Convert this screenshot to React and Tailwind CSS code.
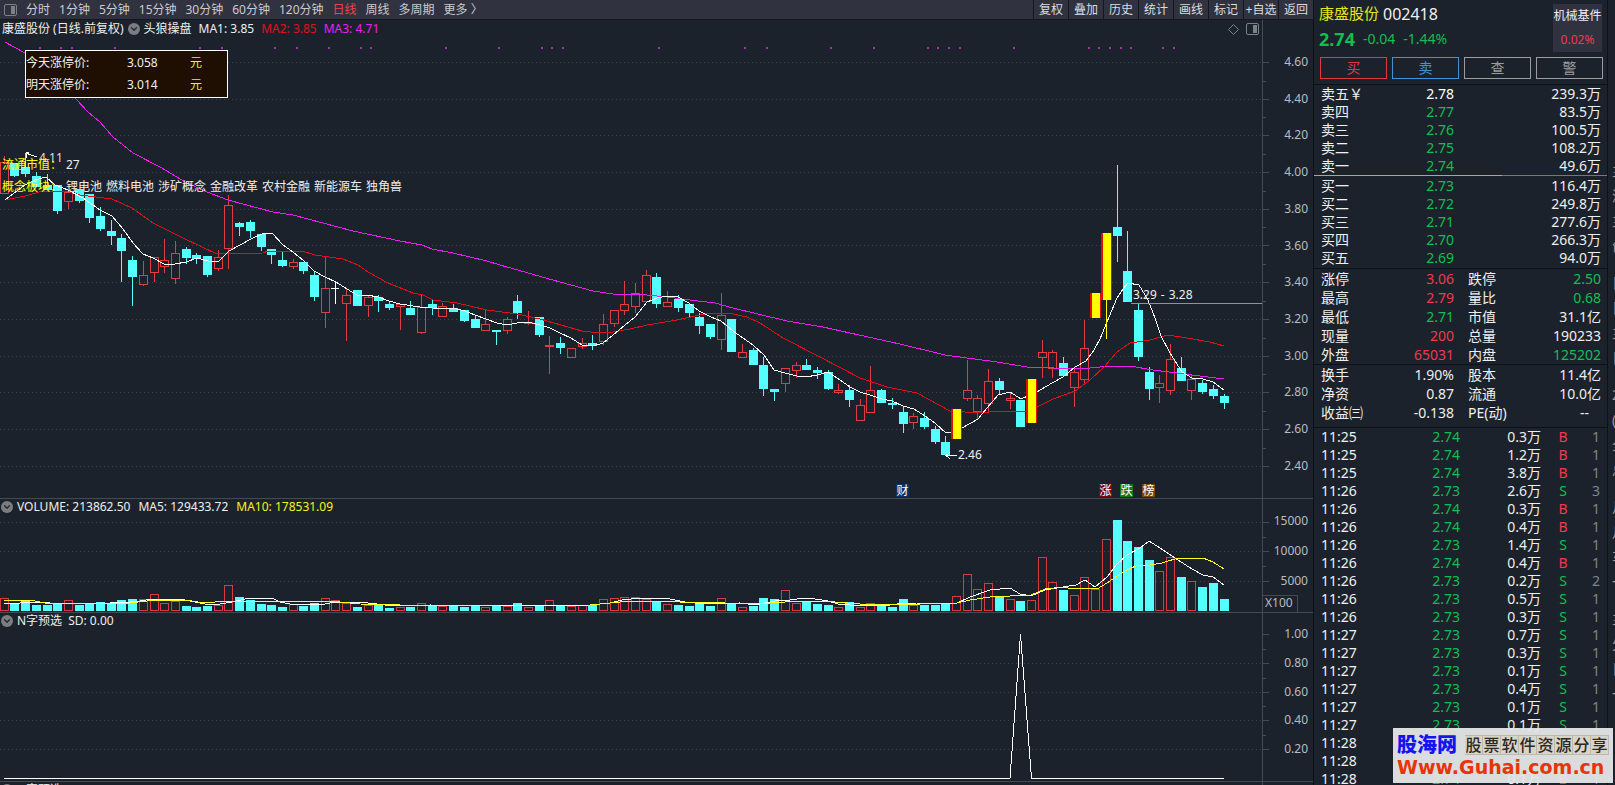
import { ChevronDown } from 'lucide-react';

const PLOT_W = 1262;

const periods = ['分时', '1分钟', '5分钟', '15分钟', '30分钟', '60分钟', '120分钟', '日线', '周线', '多周期', '更多 〉'];
const tools = ['复权', '叠加', '历史', '统计', '画线', '标记', '+自选', '返回'];

// centre of the nth bar, bars are 10.7px apart
const barX = (i) => Math.floor((425 + 1070 * i) / 100);

// [kind, open/close top, open/close bottom, high, low, volume top]
// kind: u = up, d = down, x = flat, y = signal bar
const candles = [
  ['u', 162, 194, 156, 194, 598], ['d', 163, 176, 163, 177, 604], ['d', 167, 174, 153, 177, 601], ['d', 176, 187, 172, 187, 605],
  ['d', 185, 190, 174, 190, 605], ['d', 185, 211, 185, 214, 604], ['u', 192, 202, 192, 209, 600], ['d', 189, 201, 189, 203, 605],
  ['d', 194, 218, 194, 223, 604], ['d', 216, 229, 207, 231, 602], ['d', 231, 236, 220, 245, 603], ['d', 238, 251, 234, 282, 600],
  ['d', 260, 277, 256, 306, 599], ['u', 275, 285, 261, 286, 599], ['u', 257, 273, 257, 282, 594], ['u', 260, 267, 239, 273, 603],
  ['u', 253, 279, 241, 284, 601], ['d', 249, 258, 247, 264, 606], ['d', 255, 259, 253, 264, 607], ['d', 256, 275, 256, 277, 606],
  ['u', 257, 269, 250, 271, 605], ['u', 205, 249, 195, 269, 585], ['d', 223, 227, 222, 236, 597], ['d', 222, 231, 220, 238, 600],
  ['d', 234, 247, 234, 251, 604], ['d', 249, 255, 249, 264, 605], ['d', 260, 266, 251, 267, 607], ['u', 262, 267, 259, 269, 604],
  ['d', 262, 271, 262, 274, 606], ['d', 275, 297, 271, 301, 603], ['u', 288, 313, 256, 328, 598], ['x', 288, 289, 282, 304, 600],
  ['u', 295, 304, 288, 341, 603], ['d', 290, 306, 290, 306, 607], ['u', 297, 306, 295, 317, 605], ['d', 297, 301, 295, 312, 605],
  ['d', 304, 308, 301, 310, 608], ['u', 304, 307, 304, 330, 607], ['d', 308, 315, 301, 315, 607], ['u', 307, 333, 295, 334, 603],
  ['d', 304, 308, 300, 315, 606], ['u', 306, 317, 303, 317, 606], ['d', 308, 312, 304, 312, 606], ['d', 310, 321, 310, 322, 607],
  ['d', 319, 328, 315, 328, 606], ['u', 324, 331, 310, 331, 607], ['d', 330, 332, 330, 345, 605], ['u', 319, 331, 317, 334, 606],
  ['d', 301, 313, 295, 319, 603], ['u', 322, 324, 311, 325, 607], ['d', 317, 335, 317, 337, 606], ['u', 345, 347, 336, 374, 600],
  ['d', 343, 348, 337, 354, 606], ['u', 348, 358, 348, 358, 606], ['u', 343, 347, 338, 349, 605], ['d', 343, 346, 335, 350, 605],
  ['u', 324, 342, 314, 345, 599], ['u', 310, 324, 310, 327, 598], ['u', 304, 311, 281, 315, 597], ['u', 293, 307, 283, 313, 597],
  ['u', 275, 302, 270, 302, 599], ['d', 277, 304, 273, 308, 601], ['u', 302, 307, 291, 307, 604], ['d', 299, 308, 295, 312, 605],
  ['d', 304, 313, 304, 317, 606], ['d', 317, 326, 313, 334, 604], ['d', 324, 337, 324, 339, 606], ['u', 315, 340, 293, 350, 598],
  ['d', 319, 352, 319, 352, 603], ['u', 352, 358, 344, 358, 607], ['d', 350, 365, 348, 365, 606], ['d', 365, 389, 357, 396, 598],
  ['d', 389, 392, 389, 401, 599], ['u', 368, 384, 368, 392, 590], ['u', 365, 371, 362, 378, 603], ['d', 365, 370, 359, 370, 601],
  ['d', 370, 373, 367, 379, 604], ['d', 372, 389, 370, 390, 605], ['u', 390, 393, 384, 394, 607], ['d', 390, 400, 385, 407, 602],
  ['u', 405, 421, 399, 421, 607], ['u', 390, 413, 366, 413, 603], ['d', 390, 403, 389, 403, 606], ['d', 403, 405, 398, 409, 607],
  ['d', 412, 424, 407, 433, 599], ['u', 416, 423, 413, 429, 605], ['d', 418, 427, 412, 429, 605], ['d', 429, 442, 426, 444, 605],
  ['d', 442, 455, 436, 455, 604], ['y', 409, 439, 409, 439, 596], ['u', 390, 399, 360, 401, 574], ['u', 398, 412, 395, 420, 589],
  ['u', 381, 404, 369, 413, 583], ['d', 381, 390, 378, 395, 597], ['u', 398, 401, 392, 409, 599], ['d', 400, 427, 400, 427, 601],
  ['y', 379, 423, 379, 423, 600], ['u', 352, 358, 340, 378, 557], ['u', 352, 369, 350, 378, 582], ['d', 363, 376, 357, 376, 590],
  ['u', 372, 388, 368, 407, 595], ['u', 348, 380, 320, 383, 577], ['y', 293, 318, 293, 318, 589], ['y', 233, 300, 233, 339, 539],
  ['d', 227, 236, 165, 262, 520], ['d', 271, 302, 231, 302, 541], ['d', 310, 357, 303, 361, 547], ['d', 372, 389, 367, 400, 560],
  ['u', 383, 388, 375, 403, 571], ['u', 359, 391, 344, 395, 557], ['d', 368, 381, 357, 381, 577], ['u', 379, 391, 374, 400, 581],
  ['d', 383, 392, 380, 394, 587], ['d', 389, 396, 385, 399, 583], ['d', 396, 403, 394, 409, 599],
].map(([kind, top, bottom, high, low, vol], i) => ({ kind, top, bottom, high, low, vol, x: barX(i) }));

const ma1 = '5,200 17,191 25,185 35,180 46,177 55,185 68,190 83,198 100,210 112,216 123,229 133,243 143,254 153,258 164,264 175,264 186,262 197,258 208,261 219,261 229,251 240,245 251,239 262,234 272,233 283,245 293,252 304,261 314,271 325,277 336,282 347,289 357,295 367,295 378,297 389,301 400,304 420,307 433,308 453,308 465,311 475,315 486,319 497,323 507,325 517,323 528,322 540,325 550,328 560,333 571,338 582,345 593,346 603,343 613,335 625,325 635,317 647,302 657,298 667,296 678,297 689,303 699,311 711,317 721,321 733,331 753,345 764,355 774,370 785,373 797,376 806,377 817,375 828,372 840,380 850,387 860,392 870,395 882,399 892,401 903,406 914,409 925,416 935,423 946,433 953,432 962,428 978,419 987,408 998,395 1010,392 1021,399 1037,392 1052,383 1063,377 1075,367 1086,361 1094,350 1100,339 1107,322 1117,298 1123,289 1128,283 1139,285 1148,300 1155,318 1161,336 1170,353 1182,372 1192,378 1203,379 1213,382 1224,390';
const ma2 = '5,200 25,196 43,191 67,191 80,195 112,199 132,208 153,223 185,239 217,254 263,253 268,251 302,251 315,255 343,259 358,265 368,272 388,283 413,293 423,295 433,300 457,303 487,310 517,314 540,319 582,331 600,333 613,332 630,329 647,325 677,320 695,316 710,313 733,314 747,317 760,323 783,338 820,357 860,378 887,387 917,393 950,411 980,413 997,411 1027,412 1053,399 1075,391 1090,380 1105,366 1117,352 1130,343 1150,340 1168,335 1187,338 1210,342 1224,346';
const ma3 = '5,42 25,53 50,76 76,99 88,112 100,122 113,137 133,153 160,167 187,183 207,192 228,200 273,212 293,215 353,231 400,241 422,245 432,249 453,253 487,261 500,265 560,282 593,291 613,294 647,295 667,297 690,300 715,303 733,308 787,321 823,327 850,333 900,344 945,355 997,362 1027,367 1080,369 1110,366 1130,366 1153,370 1224,379';
const volMa5 = '4,603 20,603 31,602 50,603 80,604 110,603 130,602 140,601 152,599 180,599 195,602 205,604 220,604 232,602 245,599 255,598 272,598 280,602 290,604 320,605 335,602 360,602 385,605 410,606 430,605 480,606 590,605 610,603 622,600 640,598 655,598 670,599 685,602 705,604 740,603 755,605 770,602 780,600 790,600 805,598 815,599 828,601 838,604 850,605 890,605 905,603 916,603 955,604 970,597 990,590 1010,588 1020,594 1031,596 1045,590 1063,587 1076,585 1085,580 1095,587 1107,577 1117,564 1127,555 1140,548 1149,541 1160,548 1178,560 1192,569 1203,575 1213,577 1224,585';
const volMa10 = '4,600 30,600 45,603 130,603 155,600 185,600 205,603 225,601 250,601 280,602 310,601 340,602 360,604 400,605 450,606 500,605 590,605 610,603 630,601 660,601 680,602 700,602 750,604 770,603 800,601 815,601 835,602 860,604 890,605 920,604 957,603 970,600 990,597 1031,595 1045,589 1063,587 1073,589 1085,588 1097,589 1107,583 1117,576 1127,570 1138,565 1150,565 1162,563 1178,558 1203,558 1213,562 1224,569';

const signalDots = [40, 61, 72, 115, 200, 222, 275, 297, 329, 361, 371, 446, 499, 542, 552, 563, 659, 745, 767, 831, 874, 928, 938, 949, 960, 1014, 1089, 1099, 1110, 1121, 1131, 1163, 1174];

const priceGrid = [62, 99, 135, 172, 209, 245, 282, 319, 356, 392, 429, 466];
const volGrid = [522, 551, 581];
const selGrid = [634, 663, 692, 720, 749];

const asks = [
  ['卖五￥', '2.78', '239.3万'],
  ['卖四', '2.77', '83.5万'],
  ['卖三', '2.76', '100.5万'],
  ['卖二', '2.75', '108.2万'],
  ['卖一', '2.74', '49.6万'],
];
const bids = [
  ['买一', '2.73', '116.4万'],
  ['买二', '2.72', '249.8万'],
  ['买三', '2.71', '277.6万'],
  ['买四', '2.70', '266.3万'],
  ['买五', '2.69', '94.0万'],
];

const RED = 'text-[#f03a4c]';
const GREEN = 'text-[#12be50]';
const WHITE = 'text-[#eeeeee]';

const stats = [
  ['涨停', '3.06', RED, '跌停', '2.50', GREEN],
  ['最高', '2.79', RED, '量比', '0.68', GREEN],
  ['最低', '2.71', GREEN, '市值', '31.1亿', WHITE],
  ['现量', '200', RED, '总量', '190233', WHITE],
  ['外盘', '65031', RED, '内盘', '125202', GREEN],
];
const fundamentals = [
  ['换手', '1.90%', WHITE, '股本', '11.4亿', WHITE],
  ['净资', '0.87', WHITE, '流通', '10.0亿', WHITE],
  ['收益㈢', '-0.138', WHITE, 'PE(动)', '--', WHITE],
];

const trades = [
  ['11:25', '2.74', '0.3万', 'B', 1],
  ['11:25', '2.74', '1.2万', 'B', 1],
  ['11:25', '2.74', '3.8万', 'B', 1],
  ['11:26', '2.73', '2.6万', 'S', 3],
  ['11:26', '2.74', '0.3万', 'B', 1],
  ['11:26', '2.74', '0.4万', 'B', 1],
  ['11:26', '2.73', '1.4万', 'S', 1],
  ['11:26', '2.74', '0.4万', 'B', 1],
  ['11:26', '2.73', '0.2万', 'S', 2],
  ['11:26', '2.73', '0.5万', 'S', 1],
  ['11:26', '2.73', '0.3万', 'S', 1],
  ['11:27', '2.73', '0.7万', 'S', 1],
  ['11:27', '2.73', '0.3万', 'S', 1],
  ['11:27', '2.73', '0.1万', 'S', 1],
  ['11:27', '2.73', '0.4万', 'S', 1],
  ['11:27', '2.73', '0.1万', 'S', 1],
  ['11:27', '2.73', '0.1万', 'S', 1],
  ['11:28', '', '', '', ''],
  ['11:28', '', '', '', ''],
  ['11:28', '2.74', '0.1万', 'B', 1],
];

const leftPct = (x) => ({ left: `${(x / PLOT_W) * 100}%` });

const PanelIcon = ({ className }) => (
  <svg className={className} width="13" height="12" viewBox="0 0 13 12" fill="none">
    <rect x="0.5" y="0.5" width="12" height="11" rx="1.5" stroke="currentColor" />
    <rect x="7" y="2" width="4" height="8" fill="currentColor" />
  </svg>
);

const FoldButton = () => (
  <button aria-label="指标菜单" className="flex size-3 shrink-0 items-center justify-center rounded-full bg-[#7b7d80] text-[#22262e]">
    <ChevronDown className="size-[10px]" strokeWidth={3} />
  </button>
);

const Grid = ({ lines }) => (
  <g stroke="#3d444e" strokeDasharray="1 3">
    {lines.map((y) => <line key={y} x1="0" x2={PLOT_W} y1={y + 0.5} y2={y + 0.5} />)}
  </g>
);

const Plot = ({ top, height, className, children }) => (
  <svg className={`block w-full ${className}`} viewBox={`0 ${top} ${PLOT_W} ${height}`} preserveAspectRatio="none" shapeRendering="crispEdges" fill="none">
    {children}
  </svg>
);

const AxisTicks = ({ top, height, lines, className }) => (
  <svg className={`block w-[6px] shrink-0 ${className}`} viewBox={`0 ${top} 6 ${height}`} shapeRendering="crispEdges" stroke="#454b55">
    {lines.map((y, i) => (
      <g key={y}>
        <line x1="0" x2="6" y1={y + 0.5} y2={y + 0.5} />
        {i < lines.length - 1 && (
          <line x1="0" x2="3" y1={Math.round((y + lines[i + 1]) / 2) + 0.5} y2={Math.round((y + lines[i + 1]) / 2) + 0.5} />
        )}
      </g>
    ))}
  </svg>
);

const Candle = ({ c }) => {
  if (c.kind === 'd') {
    return (
      <g fill="#55ffff">
        <rect x={c.x} y={c.high} width="1" height={c.low - c.high} />
        <rect x={c.x - 4} y={c.top} width="9" height={c.bottom - c.top} />
      </g>
    );
  }
  if (c.kind === 'x') {
    return (
      <g fill="#ffffff">
        <rect x={c.x} y={c.high} width="1" height={c.low - c.high} />
        <rect x={c.x - 4} y={c.top} width="8" height="1" />
      </g>
    );
  }
  return (
    <g fill="#e03c44">
      <rect x={c.x} y={c.high} width="1" height={c.top - c.high} />
      <rect x={c.x} y={c.bottom} width="1" height={c.low - c.bottom} />
      <rect x={c.x - 4 + 0.5} y={c.top + 0.5} width="8" height={c.bottom - c.top - 1} fill="none" stroke="#e03c44" />
    </g>
  );
};

const SignalBar = ({ c }) => (
  <g>
    <rect x={c.x} y={c.bottom} width="1" height={c.low - c.bottom} fill="#ffff00" />
    <rect x={c.x - 5} y={c.top} width="11" height={c.bottom - c.top} fill="#e01000" />
    <rect x={c.x - 3} y={c.top} width="8" height={c.bottom - c.top} fill="#ffff00" />
  </g>
);

const Badge = ({ x, className, children }) => (
  <span className={`absolute top-[446px] w-[13px] text-center text-xs leading-[13px] text-white ${className}`} style={leftPct(x)}>
    {children}
  </span>
);

const PriceChart = () => (
  <section className="flex border-b border-[#454b55]">
    <div className="min-w-0 flex-1">
      <div className="flex h-[18px] items-center gap-[7px] pl-[2px] pr-[3px] whitespace-nowrap">
        <span className="flex items-center gap-1">
          <span>康盛股份 (日线.前复权)</span>
          <FoldButton />
          <span>头狼操盘</span>
        </span>
        <span>MA1: 3.85</span>
        <span className="text-[#e0101c]">MA2: 3.85</span>
        <span className="text-[#f01cf8]">MA3: 4.71</span>
        <span className="ml-auto flex items-center gap-[7px] text-[#7d8187]">
          <svg width="11" height="11" viewBox="0 0 11 11" fill="none" stroke="currentColor">
            <path d="M5.5 0.5 10.5 5.5 5.5 10.5 0.5 5.5Z" />
          </svg>
          <PanelIcon />
        </span>
      </div>
      <div className="relative">
        <Plot top={38} height={460} className="h-[460px]">
          <Grid lines={priceGrid} />
          {signalDots.map((x) => <rect key={x} x={x - 1} y="47" width="2" height="2" fill="#b02cb8" />)}
          {candles.filter((c) => c.kind !== 'y').map((c) => <Candle key={c.x} c={c} />)}
          <polyline points={ma3} stroke="#f01cf8" />
          <polyline points={ma2} stroke="#dc1018" />
          <polyline points={ma1} stroke="#ffffff" />
          {candles.filter((c) => c.kind === 'y').map((c) => <SignalBar key={c.x} c={c} />)}
          <line x1="1131" x2={PLOT_W} y1="303.5" y2="303.5" stroke="#8f9296" />
          <path d="M26 158V152.500H29M27 153.500L37 157" stroke="#ffffff" />
          <path d="M957 455.500H946M950 452L946 455.500L950 459" stroke="#ffffff" />
        </Plot>

        <div className="absolute left-[25px] top-[12px] grid h-[48px] w-[203px] grid-cols-[101px_63px_1fr] content-center border border-white bg-[#1e0f02] pb-px leading-[22px]">
          <span>今天涨停价:</span>
          <span>3.058</span>
          <span className="text-[#f0f020]">元</span>
          <span>明天涨停价:</span>
          <span>3.014</span>
          <span className="text-[#f0f020]">元</span>
        </div>

        <span className="absolute left-[39px] top-[112px] leading-4 text-[#dddddd]">4.11</span>
        <div className="absolute left-[2px] top-[116px] grid grid-cols-[64px_auto] whitespace-nowrap leading-[22px]">
          <span className="text-[#ffff00]">流通市值：</span>
          <span>27</span>
          <span className="text-[#ffff00]">概念板块：</span>
          <span className="flex gap-1">
            {['锂电池', '燃料电池', '涉矿概念', '金融改革', '农村金融', '新能源车', '独角兽'].map((t) => <span key={t}>{t}</span>)}
          </span>
        </div>
        <span className="absolute top-[409px] leading-4" style={leftPct(958)}>2.46</span>
        <span className="absolute top-[249px] flex gap-1 leading-4" style={leftPct(1133)}>
          <span>3.29</span>
          <span>-</span>
          <span>3.28</span>
        </span>
        <Badge x={896} className="bg-[#0b3266]">财</Badge>
        <Badge x={1099} className="bg-[#7d0606]">涨</Badge>
        <Badge x={1120} className="bg-[#0a7a14]">跌</Badge>
        <Badge x={1142} className="bg-[#7c4504]">榜</Badge>
      </div>
    </div>
    <div className="flex w-[51px] shrink-0 border-l border-[#454b55]">
      <AxisTicks top={20} height={478} lines={priceGrid} className="h-[478px]" />
      <div className="flex flex-1 flex-col justify-between pb-6 pr-[5px] pt-[34px] text-right leading-4 text-[#b9bcc0]">
        {['4.60', '4.40', '4.20', '4.00', '3.80', '3.60', '3.40', '3.20', '3.00', '2.80', '2.60', '2.40'].map((p) => <span key={p}>{p}</span>)}
      </div>
    </div>
  </section>
);

const VolumeChart = () => (
  <section className="flex border-b border-[#454b55]">
    <div className="min-w-0 flex-1">
      <div className="flex h-4 items-center gap-2 whitespace-nowrap pl-[1px]">
        <span className="flex items-center gap-1">
          <FoldButton />
          <span>VOLUME: 213862.50</span>
        </span>
        <span>MA5: 129433.72</span>
        <span className="text-[#f4f41c]">MA10: 178531.09</span>
      </div>
      <Plot top={515} height={97} className="h-[97px]">
        <Grid lines={volGrid} />
        {candles.map((c) => c.kind === 'd'
          ? <rect key={c.x} x={c.x - 4} y={c.vol} width="9" height={611 - c.vol} fill="#55ffff" />
          : <rect key={c.x} x={c.x - 3.5} y={c.vol + 0.5} width="8" height={610 - c.vol} stroke="#d83a44" />)}
        <polyline points={volMa5} stroke="#ffffff" />
        <polyline points={volMa10} stroke="#ffff20" />
      </Plot>
    </div>
    <div className="flex w-[51px] shrink-0 border-l border-[#454b55]">
      <div className="flex flex-1 flex-col">
        <div className="flex flex-1">
          <AxisTicks top={499} height={96} lines={volGrid} className="h-[96px]" />
          <div className="flex flex-1 flex-col items-end gap-[14px] pr-[5px] pt-[14px] leading-4 text-[#b9bcc0]">
            <span>15000</span>
            <span>10000</span>
            <span>5000</span>
          </div>
        </div>
        <span className="h-[17px] w-[35px] border-r border-t border-[#454b55] pl-[2px] leading-[14px] text-[#b9bcc0]">X100</span>
      </div>
    </div>
  </section>
);

const SelectChart = () => (
  <section className="flex border-b border-[#454b55]">
    <div className="min-w-0 flex-1">
      <div className="flex h-4 items-center gap-[6px] whitespace-nowrap pl-[1px]">
        <span className="flex items-center gap-1">
          <FoldButton />
          <span>N字预选</span>
        </span>
        <span>SD: 0.00</span>
      </div>
      <Plot top={629} height={152} className="h-[152px]">
        <Grid lines={selGrid.slice(1)} />
        <polyline points="4,778.5 1010,778.5 1020.5,634 1031.5,778.5 1224,778.5" stroke="#ffffff" />
      </Plot>
    </div>
    <div className="flex w-[51px] shrink-0 border-l border-[#454b55]">
      <AxisTicks top={613} height={168} lines={selGrid} className="h-[168px]" />
      <div className="flex flex-1 flex-col justify-between pb-6 pr-[5px] pt-[13px] text-right leading-4 text-[#b9bcc0]">
        {['1.00', '0.80', '0.60', '0.40', '0.20'].map((p) => <span key={p}>{p}</span>)}
      </div>
    </div>
  </section>
);

const DepthTable = ({ rows }) => (
  <table className="w-full table-fixed">
    <tbody>
      {rows.map(([label, price, vol]) => (
        <tr key={label} className="h-[18px] leading-[18px]">
          <td className="w-[70px] pl-[7px] text-[#f0f0f0]">{label}</td>
          <td className={`w-[70px] text-right ${price === '2.78' ? 'text-white' : GREEN}`}>{price}</td>
          <td className={`pr-[6px] text-right ${WHITE}`}>{vol}</td>
        </tr>
      ))}
    </tbody>
  </table>
);

const StatTable = ({ rows }) => (
  <table className="w-full table-fixed">
    <tbody>
      {rows.map(([l1, v1, c1, l2, v2, c2]) => (
        <tr key={l1} className="h-[19px] leading-[19px]">
          <td className="w-[60px] pl-[7px] text-[#f0f0f0]">{l1}</td>
          <td className={`w-[80px] text-right ${c1}`}>{v1}</td>
          <td className="w-[70px] pl-[14px] text-[#f0f0f0]">{l2}</td>
          <td className={`text-right ${v2 === '--' ? 'pr-[18px]' : 'pr-[6px]'} ${c2}`}>{v2}</td>
        </tr>
      ))}
    </tbody>
  </table>
);

const QuotePanel = () => (
  <aside className="w-[295px] shrink-0 overflow-hidden border-x border-[#0e1217] text-sm">
    <div className="flex h-[85px] flex-col border-b border-[#0e1217]">
      <div className="flex flex-1 justify-between pl-[5px] pr-[5px]">
        <div>
          <div className="flex h-7 items-center gap-1">
            <span className="text-[15px] text-[#e6e61e]">康盛股份</span>
            <span className="text-base text-[#f0f0f0]">002418</span>
          </div>
          <div className={`flex h-[22px] items-center gap-2 ${GREEN}`}>
            <span className="text-lg font-bold">2.74</span>
            <span>-0.04</span>
            <span>-1.44%</span>
          </div>
        </div>
        <div className="mt-1 flex h-12 w-[49px] flex-col items-center justify-between bg-[#31323f] py-1 text-xs leading-4">
          <a href="#sector" className="whitespace-nowrap text-[#f0f0f0]">机械基件</a>
          <span className={RED}>0.02%</span>
        </div>
      </div>
      <div className="mb-[5px] flex gap-[5px] pl-[6px] pr-1 leading-5">
        <button className="h-[22px] flex-1 border border-[#e0383f] text-[#e0383f]">买</button>
        <button className="h-[22px] flex-1 border border-[#4292d8] text-[#4292d8]">卖</button>
        <button className="h-[22px] flex-1 border border-[#9a9c9f] text-[#9a9c9f]">查</button>
        <button className="h-[22px] flex-1 border border-[#9a9c9f] text-[#9a9c9f]">警</button>
      </div>
    </div>

    <DepthTable rows={asks} />
    <div className="mb-px flex h-px">
      <div className="w-[64%] bg-[#d8a03c]" />
      <div className="flex-1 bg-[#3c86c8]" />
    </div>
    <DepthTable rows={bids} />
    <div className="mt-px border-y border-[#0e1217]">
      <StatTable rows={stats} />
    </div>
    <div className="border-b border-[#0e1217] pb-[5px]">
      <StatTable rows={fundamentals} />
    </div>

    <table className="w-full table-fixed">
      <tbody>
        {trades.map(([time, price, vol, side, n], i) => (
          <tr key={i} className="h-[18px] leading-[18px]">
            <td className="w-[66px] pl-[7px] text-[#f0f0f0]">{time}</td>
            <td className={`w-[80px] text-right ${GREEN}`}>{price}</td>
            <td className={`w-[81px] text-right ${WHITE}`}>{vol}</td>
            <td className={`w-[44px] text-center ${side === 'B' ? RED : GREEN}`}>{side}</td>
            <td className="pr-[7px] text-right text-[#80848a]">{n}</td>
          </tr>
        ))}
      </tbody>
    </table>
  </aside>
);

// Next column, only its first few pixels are on screen
const EdgeColumn = () => (
  <div className="flex w-[7px] shrink-0 flex-col gap-3 overflow-hidden pl-1 pt-[158px] text-sm leading-[25px] text-[#9a9c9f]">
    {['主深主创', '日日主日', '2(全总', '月月车一', '主欠日一'].map((group) => (
      <div key={group} className="flex flex-col">
        {group.split('').map((ch, i) => <span key={i}>{ch}</span>)}
      </div>
    ))}
  </div>
);

const Watermark = () => (
  <div className="absolute bottom-[2px] right-[2px] h-[55px] w-[220px] bg-[#e6e7e8]/95 px-1 pt-[5px]">
    <div className="flex h-6 items-center gap-2 whitespace-nowrap">
      <span className="text-xl font-black leading-6 text-[#1414f0]">股海网</span>
      <span className="flex bg-[#d9d4c8] text-base leading-[18px] text-[#2c2822]">
        {'股票软件资源分享'.split('').map((ch) => (
          <span key={ch} className="w-[18px] border-y border-r border-[#bdb8ad] text-center font-medium leading-[18px]">{ch}</span>
        ))}
      </span>
    </div>
    <a href="#guhai" className="block font-['DejaVu_Sans'] text-[19px] font-bold leading-5 text-[#e83408]">Www.Guhai.com.cn</a>
  </div>
);

export default function App() {
  return (
    <div className="relative flex h-screen overflow-hidden bg-[#1c222b] font-['Noto_Sans','Noto_Sans_CJK_SC',sans-serif] text-xs text-[#eeeeee]">
      <main className="flex min-w-0 flex-1 flex-col overflow-hidden">
        <nav className="flex h-5 shrink-0 items-stretch justify-between border-b border-[#14181e] bg-[#31323f] text-[#c9cbd0]">
          <div className="flex items-center gap-[9px] whitespace-nowrap pl-1">
            <PanelIcon className="text-[#7d8187]" />
            {periods.map((p) => (
              <button key={p} className={p === '日线' ? 'text-[#f0404c]' : ''}>{p}</button>
            ))}
          </div>
          <div className="flex">
            {tools.map((t) => (
              <button key={t} className="w-[35px] whitespace-nowrap border-l border-[#14181e] text-center text-[#dcdde0]">{t}</button>
            ))}
          </div>
        </nav>
        <PriceChart />
        <VolumeChart />
        <SelectChart />
        <div className="flex">
          <div className="flex h-4 flex-1 items-center gap-1 pl-[1px]">
            <FoldButton />
            <span>N字预选</span>
          </div>
          <div className="w-[51px] border-l border-[#454b55]" />
        </div>
      </main>
      <QuotePanel />
      <EdgeColumn />
      <Watermark />
    </div>
  );
}
